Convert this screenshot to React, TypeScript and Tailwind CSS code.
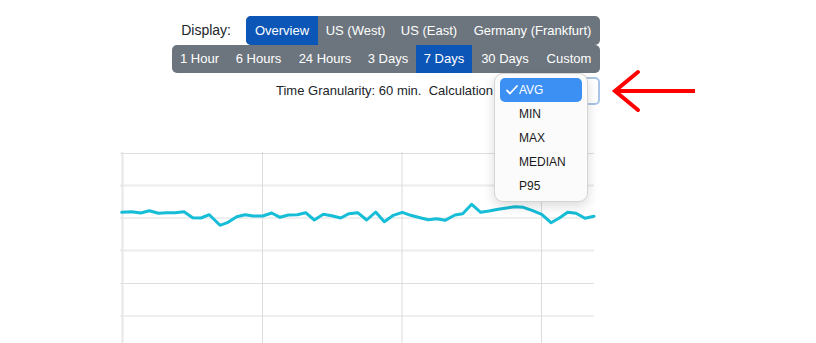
import React from "react";

const pts: [number, number][] = [
  [121.7, 212.3], [131.7, 211.7], [140.7, 213], [149.3, 210.7], [158.3, 213.3], [166.7, 212.7],
  [175, 212.7], [184, 211.7], [192.7, 217.7], [201, 218], [209.3, 214.7], [220, 225.3],
  [227.3, 222.7], [236.7, 216.7], [245, 214.7], [253.3, 216], [262.7, 216], [271.7, 213],
  [280, 217.3], [288.3, 215], [297.3, 214.7], [305.7, 212.7], [314.3, 220], [323.3, 214.3],
  [331.7, 215.7], [340.7, 218], [349, 213.7], [357.7, 212.7], [366.7, 220], [375.7, 212],
  [384.3, 221.7], [393.3, 215.3], [402.3, 212.3], [410.7, 215.3], [420, 217.7], [428.3, 219.7],
  [436.7, 218.7], [445, 220.3], [455, 215], [462.7, 213.7], [471.7, 204.3], [480.7, 212.3],
  [489, 211], [498.3, 209.3], [506.7, 208], [515, 206.7], [523.3, 207.3], [532.7, 210.7],
  [541.7, 214.3], [551, 222.7], [559, 218.3], [567.7, 212.3], [576, 213.3], [585, 218.3],
  [594, 216.3],
];

const row1 = [
  { label: "Overview", w: "w-[72px]", active: true },
  { label: "US (West)", w: "w-[75px]", active: false },
  { label: "US (East)", w: "w-[72px]", active: false },
  { label: "Germany (Frankfurt)", w: "w-[135px]", active: false },
];

const row2 = [
  { label: "1 Hour", w: "w-[55px]", active: false },
  { label: "6 Hours", w: "w-[63px]", active: false },
  { label: "24 Hours", w: "w-[70px]", active: false },
  { label: "3 Days", w: "w-[56px]", active: false },
  { label: "7 Days", w: "w-[56px]", active: true },
  { label: "30 Days", w: "w-[66px]", active: false },
  { label: "Custom", w: "w-[62px]", active: false },
];

export default function App() {
  const hLines = [153.5, 185.5, 218, 250.5, 283.5, 316];
  const vLines = [122.5, 262.5, 402, 541.5];
  return (
    <div
      className="relative w-[816px] h-[343px] overflow-hidden bg-white text-[#212529]"
      style={{ fontFamily: '"Liberation Sans", Arial, sans-serif' }}
    >
      <div className="ml-[172px] pt-[16px] w-[428px] flex flex-col items-end">
        <div className="flex items-center">
          <span className="text-[14px] mr-[15px]">Display:</span>
          <div className="flex h-[29px] rounded-[5px] overflow-hidden bg-[#6c757d]">
            {row1.map((b) => (
              <div
                key={b.label}
                className={`${b.w} flex items-center justify-center text-[13px] text-white ${b.active ? "bg-[#0b56b6]" : ""}`}
              >
                {b.label}
              </div>
            ))}
          </div>
        </div>
        <div className="flex h-[28px] rounded-[5px] overflow-hidden bg-[#6c757d]">
          {row2.map((b) => (
            <div
              key={b.label}
              className={`${b.w} flex items-center justify-center text-[13px] text-white ${b.active ? "bg-[#0b56b6]" : ""}`}
            >
              {b.label}
            </div>
          ))}
        </div>
        <div className="flex items-center mt-[4px]">
          <span className="text-[13px] whitespace-pre mr-[4px]">Time Granularity: 60 min.  Calculation</span>
          <div className="relative w-[103px] h-[28px] rounded-[5px] border-2 border-[#a9c5e8] bg-white">
            <div className="absolute left-[-5px] top-[-6px] w-[94px] h-[129px] rounded-[9px] border border-[#d4d4d4] bg-[#fbfbfb] shadow-[0_4px_12px_rgba(0,0,0,0.15)] px-[5px] pt-[4px] z-10">
              <div className="h-[24px] rounded-[5px] bg-[#3c90f4] flex items-center text-white text-[12px]">
                <svg width="12" height="10" viewBox="0 0 12 10" className="ml-[6px] mr-[1px]">
                  <polyline points="1,5.5 4,8.5 11,1" fill="none" stroke="white" strokeWidth="1.8" strokeLinecap="round" strokeLinejoin="round" />
                </svg>
                <span>AVG</span>
              </div>
              {["MIN", "MAX", "MEDIAN", "P95"].map((t) => (
                <div key={t} className="h-[24px] flex items-center pl-[19px] text-[12px] text-[#1a1a1a]">
                  {t}
                </div>
              ))}
            </div>
          </div>
        </div>
      </div>

      <svg width="482" height="193" className="ml-[118px] mt-[45px] block">
        <g transform="translate(-118,-150)">
          {hLines.map((y, i) => (
            <line key={"h" + i} x1={120} x2={594} y1={y} y2={y} stroke={i === 1 || i === 3 ? "#ececec" : "#dedede"} strokeWidth={i === 1 || i === 3 ? 2 : 1} />
          ))}
          {vLines.map((x, i) => (
            <line key={"v" + i} x1={x} x2={x} y1={152} y2={343} stroke={i === 0 ? "#e6e6e6" : "#dcdcdc"} strokeWidth={i === 0 ? 2 : 1} />
          ))}
          <polyline
            points={pts.map((p) => p.join(",")).join(" ")}
            fill="none"
            stroke="#15bdd7"
            strokeWidth="3"
            strokeLinejoin="round"
            strokeLinecap="round"
          />
        </g>
      </svg>

      <svg width="100" height="50" className="absolute left-[605px] top-[66px]">
        <g transform="translate(-605,-66)">
          <line x1={615} y1={91} x2={695} y2={91} stroke="#ff0000" strokeWidth="4" />
          <polyline points="638,72 615,91 638,110" fill="none" stroke="#ff0000" strokeWidth="4" strokeLinecap="round" strokeLinejoin="miter" />
        </g>
      </svg>
    </div>
  );
}
